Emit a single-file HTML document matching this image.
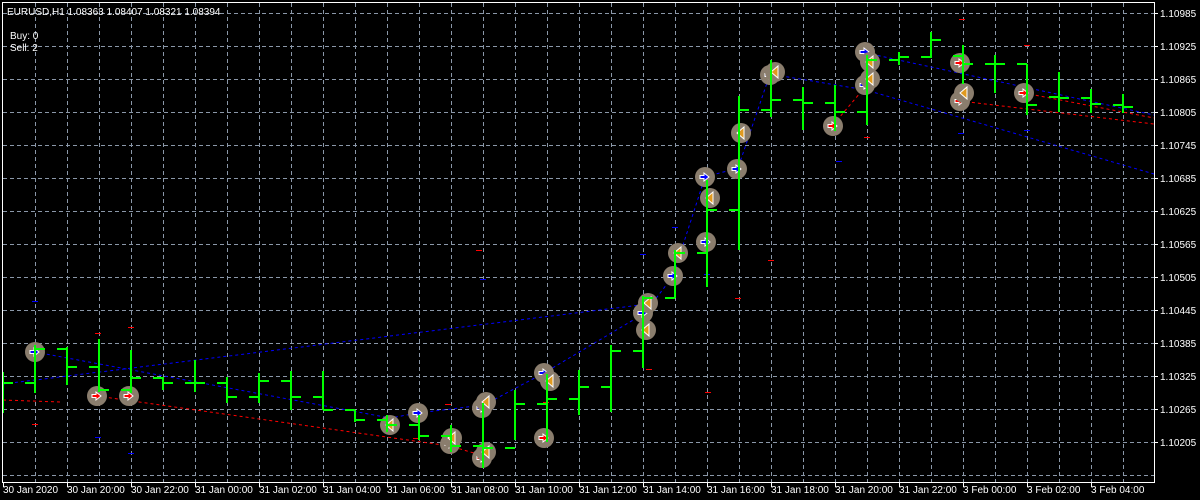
<!DOCTYPE html>
<html><head><meta charset="utf-8"><style>
html,body{margin:0;padding:0;background:#000;width:1200px;height:500px;overflow:hidden}
svg{display:block}
text{font-family:"Liberation Sans",sans-serif;font-size:10px;fill:#fff}
</style></head><body>
<svg width="1200" height="500" viewBox="0 0 1200 500" xmlns="http://www.w3.org/2000/svg">
<rect width="1200" height="500" fill="#000"/>
<g stroke="#8a97a8" stroke-width="1" stroke-dasharray="4,3" fill="none">
<path d="M3 13.5H1154M3 46.5H1154M3 79.5H1154M3 112.5H1154M3 145.5H1154M3 178.5H1154M3 211.5H1154M3 244.5H1154M3 277.5H1154M3 310.5H1154M3 343.5H1154M3 376.5H1154M3 409.5H1154M3 442.5H1154M3 475.5H1154"/>
<path d="M35.5 3V482M67.5 3V482M99.5 3V482M131.5 3V482M163.5 3V482M195.5 3V482M227.5 3V482M259.5 3V482M291.5 3V482M323.5 3V482M355.5 3V482M387.5 3V482M419.5 3V482M451.5 3V482M483.5 3V482M515.5 3V482M547.5 3V482M579.5 3V482M611.5 3V482M643.5 3V482M675.5 3V482M707.5 3V482M739.5 3V482M771.5 3V482M803.5 3V482M835.5 3V482M867.5 3V482M899.5 3V482M931.5 3V482M963.5 3V482M995.5 3V482M1027.5 3V482M1059.5 3V482M1091.5 3V482M1123.5 3V482"/>
</g>
<g fill="none" stroke-width="1" stroke-dasharray="3,3">
<path stroke="#0000ff" d="M3 384L640 305"/>
<path stroke="#0000ff" d="M35 352L390 418L418 413L484 405L544 373L645 313L673 276L705 177L738 168L770 74L866 90L1154 174"/>
<path stroke="#0000ff" d="M866 53L1154 115"/>
<path stroke="#ff0000" d="M97 396L450 446L484 456"/>
<path stroke="#ff0000" d="M3 400L60 402"/>
<path stroke="#ff0000" d="M960 101L1154 124"/>
<path stroke="#ff0000" d="M1024 93L1154 118"/>
<path stroke="#ff0000" d="M833 125L866 86"/>
</g>
<g stroke-width="1">
<path stroke="#ff0000" d="M32 424.5H38M95 333.5H101M128 327.5H134M445 404.5H451M705 392.5H711M735 298.5H741M768 260.5H774M1024 45.5H1030M959 19.5H965M864 137.5H870M476 250.5H482M413 438.5H419M543 402.5H549M646 369.5H652"/>
<path stroke="#0000ff" d="M32 301.5H38M95 437.5H101M128 453.5H134M836 161.5H842M640 254.5H646M672 227.5H678M704 274.5H710M738 134.5H744M958 133.5H964M1024 130.5H1030M480 279.5H486"/>
</g>
<defs>
<g id="cb"><circle r="10" fill="#8a7d6d"/><path d="M-5 -1.5H-1V-4L4 0L-1 4V1.5H-5Z" fill="#0000ff" stroke="#fff" stroke-width="1"/></g>
<g id="cr"><circle r="10" fill="#8a7d6d"/><path d="M-5 -1.5H-1V-4L4 0L-1 4V1.5H-5Z" fill="#ff0000" stroke="#fff" stroke-width="1"/></g>
<g id="cy"><circle r="10" fill="#8a7d6d"/><path d="M3 -6V6L-4 0Z" fill="#e09a20" stroke="#fff" stroke-width="1"/></g>
</defs>
<g>
<use href="#cb" x="35" y="352"/>
<use href="#cr" x="97" y="396"/>
<use href="#cr" x="129" y="396"/>
<use href="#cy" x="390" y="425"/>
<use href="#cb" x="418" y="413"/>
<use href="#cr" x="450" y="444"/>
<use href="#cy" x="452" y="438"/>
<use href="#cb" x="482" y="408"/>
<use href="#cy" x="486" y="402"/>
<use href="#cr" x="482" y="458"/>
<use href="#cy" x="486" y="452"/>
<use href="#cb" x="544" y="373"/>
<use href="#cy" x="550" y="381"/>
<use href="#cr" x="544" y="438"/>
<use href="#cb" x="673" y="276"/>
<use href="#cy" x="678" y="253"/>
<use href="#cy" x="646" y="330"/>
<use href="#cb" x="643" y="313"/>
<use href="#cy" x="648" y="303"/>
<use href="#cb" x="706" y="242"/>
<use href="#cy" x="710" y="198"/>
<use href="#cb" x="705" y="177"/>
<use href="#cb" x="737" y="169"/>
<use href="#cy" x="741" y="133"/>
<use href="#cb" x="770" y="75"/>
<use href="#cy" x="775" y="72"/>
<use href="#cr" x="833" y="126"/>
<use href="#cb" x="865" y="85"/>
<use href="#cy" x="870" y="79"/>
<use href="#cb" x="865" y="52"/>
<use href="#cy" x="870" y="62"/>
<use href="#cr" x="960" y="63"/>
<use href="#cr" x="960" y="101"/>
<use href="#cy" x="964" y="93"/>
<use href="#cr" x="1024" y="93"/>
</g>
<g stroke="#00ff00" stroke-width="2" fill="none">
<path d="M3 372V413M3 383H13"/>
<path d="M35 345V393M25 383H35M35 349H45"/>
<path d="M67 347V385M57 349H67M67 367H77"/>
<path d="M99 339V392M89 367H99M99 390H109"/>
<path d="M131 350V393M121 390H131M131 378H141"/>
<path d="M163 377V390M153 378H163M163 383H173"/>
<path d="M195 360V392M185 383H195M195 383H205"/>
<path d="M227 377V403M217 383H227M227 397H237"/>
<path d="M259 373V403M249 397H259M259 381H269"/>
<path d="M291 371V410M281 381H291M291 397H301"/>
<path d="M323 371V410M313 397H323M323 410H333"/>
<path d="M355 410V422M345 410H355M355 420H365"/>
<path d="M387 415V432M377 420H387M387 425H397"/>
<path d="M419 415V440M409 425H419M419 436H429"/>
<path d="M451 425V452M441 436H451M451 446H461"/>
<path d="M483 403V468M473 446H483M483 448H493"/>
<path d="M515 390V440M505 448H515M515 404H525"/>
<path d="M547 374V442M537 404H547M547 399H557"/>
<path d="M579 370V415M569 399H579M579 387H589"/>
<path d="M611 345V412M601 387H611M611 351H621"/>
<path d="M643 296V368M633 351H643M643 298H653"/>
<path d="M675 250V298M665 298H675M675 253H685"/>
<path d="M707 180V287M697 253H707M707 210H717"/>
<path d="M739 96V250M729 210H739M739 110H749"/>
<path d="M771 60V117M761 110H771M771 100H781"/>
<path d="M803 87V130M793 100H803M803 103H813"/>
<path d="M835 85V131M825 103H835M835 112H845"/>
<path d="M867 55V125M857 112H867M867 60H877"/>
<path d="M899 52V65M889 60H899M899 57H909"/>
<path d="M931 32V58M921 57H931M931 40H941"/>
<path d="M963 45V84M953 56H963M963 64H973"/>
<path d="M995 55V93M985 64H995M995 64H1005"/>
<path d="M1027 64V115M1017 64H1027M1027 105H1037"/>
<path d="M1059 72V112M1049 97H1059M1059 98H1069"/>
<path d="M1091 89V113M1081 98H1091M1091 104H1101"/>
<path d="M1123 94V113M1113 105H1123M1123 107H1133"/>
</g>
<g stroke="#fff" stroke-width="1" fill="none">
<path d="M2.5 2.5H1154.5V482.5H2.5Z"/>
<path d="M1154 13.5H1158M1154 46.5H1158M1154 79.5H1158M1154 112.5H1158M1154 145.5H1158M1154 178.5H1158M1154 211.5H1158M1154 244.5H1158M1154 277.5H1158M1154 310.5H1158M1154 343.5H1158M1154 376.5H1158M1154 409.5H1158M1154 442.5H1158"/>
<path d="M3.5 482V487M67.5 482V487M131.5 482V487M195.5 482V487M259.5 482V487M323.5 482V487M387.5 482V487M451.5 482V487M515.5 482V487M579.5 482V487M643.5 482V487M707.5 482V487M771.5 482V487M835.5 482V487M899.5 482V487M963.5 482V487M1027.5 482V487M1091.5 482V487"/>
</g>
<text x="7" y="15">EURUSD,H1  1.08363 1.08407 1.08321 1.08394</text>
<text x="10" y="39">Buy: 0</text>
<text x="10" y="51">Sell: 2</text>
<g>
<text x="1160" y="17">1.10985</text>
<text x="1160" y="50">1.10925</text>
<text x="1160" y="83">1.10865</text>
<text x="1160" y="116">1.10805</text>
<text x="1160" y="149">1.10745</text>
<text x="1160" y="182">1.10685</text>
<text x="1160" y="215">1.10625</text>
<text x="1160" y="248">1.10565</text>
<text x="1160" y="281">1.10505</text>
<text x="1160" y="314">1.10445</text>
<text x="1160" y="347">1.10385</text>
<text x="1160" y="380">1.10325</text>
<text x="1160" y="413">1.10265</text>
<text x="1160" y="446">1.10205</text>
</g>
<g>
<text x="3" y="493">30 Jan 2020</text>
<text x="67" y="493">30 Jan 20:00</text>
<text x="131" y="493">30 Jan 22:00</text>
<text x="195" y="493">31 Jan 00:00</text>
<text x="259" y="493">31 Jan 02:00</text>
<text x="323" y="493">31 Jan 04:00</text>
<text x="387" y="493">31 Jan 06:00</text>
<text x="451" y="493">31 Jan 08:00</text>
<text x="515" y="493">31 Jan 10:00</text>
<text x="579" y="493">31 Jan 12:00</text>
<text x="643" y="493">31 Jan 14:00</text>
<text x="707" y="493">31 Jan 16:00</text>
<text x="771" y="493">31 Jan 18:00</text>
<text x="835" y="493">31 Jan 20:00</text>
<text x="899" y="493">31 Jan 22:00</text>
<text x="963" y="493">3 Feb 00:00</text>
<text x="1027" y="493">3 Feb 02:00</text>
<text x="1091" y="493">3 Feb 04:00</text>
</g>
</svg>
</body></html>
